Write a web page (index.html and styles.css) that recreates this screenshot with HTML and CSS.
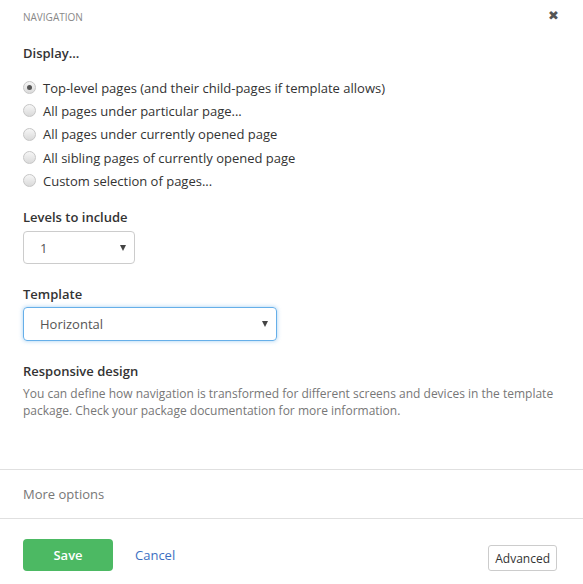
FILE: index.html
```html
<!DOCTYPE html>
<html>
<head>
<meta charset="utf-8">
<link rel="stylesheet" href="styles.css">
</head>
<body>
<div class="dialog">
  <div class="header">
    <span class="title">NAVIGATION</span>
    <span class="close">&#x2716;</span>
  </div>
  <div class="body">
    <div class="label">Display...</div>
    <div class="radios">
      <label class="radio"><span class="dot checked"></span>Top-level pages (and their child-pages if template allows)</label>
      <label class="radio"><span class="dot"></span>All pages under particular page...</label>
      <label class="radio"><span class="dot"></span>All pages under currently opened page</label>
      <label class="radio"><span class="dot"></span>All sibling pages of currently opened page</label>
      <label class="radio"><span class="dot"></span>Custom selection of pages...</label>
    </div>
    <div class="label levels">Levels to include</div>
    <div class="select small"><span>1</span><span class="arrow"></span></div>
    <div class="label tpl">Template</div>
    <div class="select wide focus"><span>Horizontal</span><span class="arrow"></span></div>
    <div class="label resp">Responsive design</div>
    <p class="help">You can define how navigation is transformed for different screens and devices in the template package. Check your package documentation for more information.</p>
  </div>
  <div class="more">More options</div>
  <div class="footer">
    <div class="actions">
      <button class="save">Save</button>
      <a class="cancel">Cancel</a>
    </div>
    <button class="advanced">Advanced</button>
  </div>
</div>
</body>
</html>
```
FILE: styles.css
```css
html, body {
  margin: 0;
  padding: 0;
  background: #fff;
}
body {
  font-family: "Open Sans", "Noto Sans", sans-serif;
  font-size: 13px;
  color: #333;
}
.dialog {
  width: 583px;
}
.header {
  display: flex;
  justify-content: space-between;
  align-items: center;
  padding: 9px 23px 0 23px;
  height: 16px;
}
.title {
  font-size: 10px;
  color: #888;
}
.close {
  font-size: 13px;
  color: #555;
  margin-right: 1px;
  position: relative;
  top: -2px;
}
.body {
  padding: 0 23px;
}
.label {
  font-weight: 600;
  font-size: 13px;
  color: #333;
  line-height: 18px;
}
.label:first-child {
  margin-top: 19px;
}
.radios {
  display: flex;
  flex-direction: column;
  margin-top: 14px;
}
.radio {
  display: flex;
  align-items: center;
  height: 23.3px;
  line-height: 18px;
}
.dot {
  width: 13px;
  height: 13px;
  border-radius: 50%;
  border: 1px solid #c6c6c6;
  background: linear-gradient(#f6f6f6, #dadada);
  margin: 0 7px 0 0;
  position: relative;
  box-sizing: border-box;
}
.dot.checked::after {
  content: "";
  position: absolute;
  left: 3px;
  top: 3px;
  width: 5px;
  height: 5px;
  border-radius: 50%;
  background: #555;
}
.levels {
  margin-top: 16px;
}
.select {
  display: flex;
  justify-content: space-between;
  align-items: center;
  height: 33px;
  box-sizing: border-box;
  border: 1px solid #ccc;
  border-radius: 4px;
  padding: 0 8px 0 16px;
  margin-top: 5px;
  color: #555;
}
.select.small {
  width: 112px;
}
.select.wide {
  width: 254px;
  height: 34px;
  margin-top: 4px;
}
.select.focus {
  border-color: #66afe9;
  box-shadow: 0 0 4px rgba(102, 175, 233, 0.6);
}
.arrow {
  width: 0;
  height: 0;
  border-left: 3.5px solid transparent;
  border-right: 3.5px solid transparent;
  border-top: 6px solid #444;
}
.tpl {
  margin-top: 21px;
}
.resp {
  margin-top: 21px;
}
.help {
  margin: 5px 0 0 0;
  font-size: 12px;
  line-height: 17px;
  color: #777;
}
.more {
  margin-top: 50px;
  border-top: 1px solid #e0e0e0;
  border-bottom: 1px solid #e0e0e0;
  height: 48px;
  display: flex;
  align-items: center;
  padding: 0 23px;
  color: #777;
}
.footer {
  display: flex;
  justify-content: space-between;
  align-items: flex-end;
  padding: 20px 26px 0 23px;
}
.actions {
  display: flex;
  align-items: center;
}
.save {
  width: 90px;
  height: 32px;
  background: #4cb963;
  border: none;
  border-radius: 4px;
  color: #fff;
  font-family: inherit;
  font-size: 13px;
  font-weight: 600;
}
.cancel {
  margin-left: 22px;
  color: #3c6fc2;
}
.advanced {
  height: 26px;
  padding: 0 6px;
  background: #fff;
  border: 1px solid #ccc;
  border-radius: 3px;
  font-family: inherit;
  font-size: 12px;
  color: #333;
}
```
